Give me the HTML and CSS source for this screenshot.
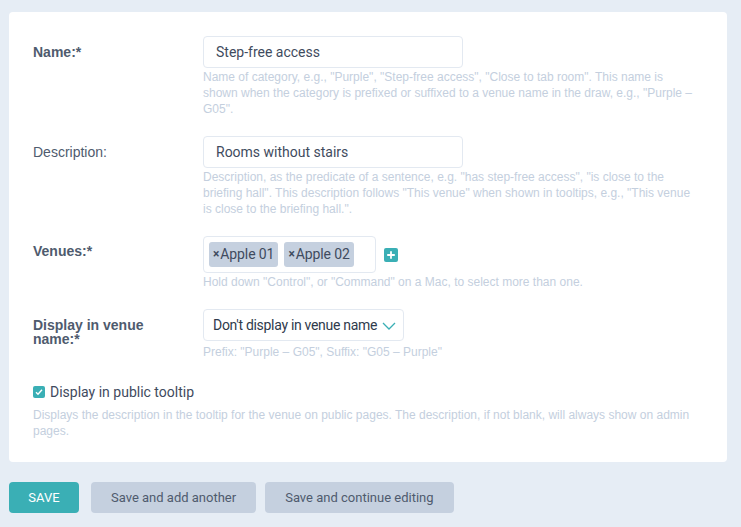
FILE: index.html
```html
<!DOCTYPE html>
<html>
<head>
<meta charset="utf-8">
<link rel="stylesheet" href="styles.css">
</head>
<body>
<div class="card">
  <div class="row">
    <div class="label req">Name:*</div>
    <div class="field">
      <div class="input">Step-free access</div>
      <div class="help">Name of category, e.g., "Purple", "Step-free access", "Close to tab room". This name is shown when the category is prefixed or suffixed to a venue name in the draw, e.g., "Purple – G05".</div>
    </div>
  </div>
  <div class="row">
    <div class="label">Description:</div>
    <div class="field">
      <div class="input">Rooms without stairs</div>
      <div class="help">Description, as the predicate of a sentence, e.g. "has step-free access", "is close to the briefing hall". This description follows "This venue" when shown in tooltips, e.g., "This venue is close to the briefing hall.".</div>
    </div>
  </div>
  <div class="row">
    <div class="label req venues-label">Venues:*</div>
    <div class="field">
      <div class="venues">
        <div class="multi">
          <span class="tag"><span class="x">×</span>Apple 01</span>
          <span class="tag"><span class="x">×</span>Apple 02</span>
        </div>
        <span class="plus"><svg width="14" height="14" viewBox="0 0 14 14"><rect width="14" height="14" rx="2" fill="#3aafb5"/><path d="M7 3.2v7.6M3.2 7h7.6" stroke="#fff" stroke-width="1.8"/></svg></span>
      </div>
      <div class="help">Hold down "Control", or "Command" on a Mac, to select more than one.</div>
    </div>
  </div>
  <div class="row">
    <div class="label req two">Display in venue name:*</div>
    <div class="field">
      <div class="select">Don't display in venue name<svg class="chev" width="14" height="8" viewBox="0 0 14 8"><path d="M1 1l6 6 6-6" fill="none" stroke="#3aafb5" stroke-width="1.3"/></svg></div>
      <div class="help sel-help">Prefix: "Purple – G05", Suffix: "G05 – Purple"</div>
    </div>
  </div>
  <div class="check-row">
    <label class="check"><span class="box"><svg width="12" height="12" viewBox="0 0 12 12"><rect width="12" height="12" rx="2" fill="#3aafb5"/><path d="M3 6.2l2 2 4-4.4" fill="none" stroke="#fff" stroke-width="1.4"/></svg></span>Display in public tooltip</label>
    <div class="help wide">Displays the description in the tooltip for the venue on public pages. The description, if not blank, will always show on admin pages.</div>
  </div>
</div>
<div class="actions">
  <button class="btn primary">SAVE</button>
  <button class="btn">Save and add another</button>
  <button class="btn">Save and continue editing</button>
</div>
</body>
</html>
```
FILE: styles.css
```css
html, body {
  margin: 0;
  padding: 0;
  background: #e6edf5;
}
body {
  padding: 12px 14px 0 9px;
  font-family: "Liberation Sans", Arial, sans-serif;
  color: #4a5568;
}
.card {
  background: #fff;
  border-radius: 4px;
  padding: 24px 24px 0 24px;
  height: 450px;
  box-sizing: border-box;
}
.row {
  display: flex;
  margin-bottom: 19px;
}
.label {
  width: 170px;
  flex: none;
  font-size: 14px;
  line-height: 14px;
  padding-top: 9px;
  color: #4f5b6e;
}
.label.req { font-weight: bold; }
.label.venues-label { padding-top: 8px; }
.label.two { width: 130px; margin-right: 40px; padding-top: 9px; }
.field { flex: 1; }
.input, .select {
  box-sizing: border-box;
  height: 32px;
  width: 260px;
  border: 1px solid #e3e9f1;
  border-radius: 4px;
  padding: 0 12px;
  font-family: Roboto, "Open Sans", sans-serif;
  font-size: 14px;
  line-height: 30px;
  color: #3f4b5e;
}
.select {
  display: inline-flex;
  align-items: center;
  width: auto;
  padding: 0 7px 0 9px;
  color: #2f3a4c;
  letter-spacing: -0.3px;
}
.chev { margin-left: 5px; margin-top: 1px; }
.help {
  font-size: 12px;
  line-height: 16px;
  color: #c4cfde;
  margin-top: 1px;
  max-width: 490px;
}
.help.sel-help { margin-top: 3px; }
.venues {
  display: flex;
  align-items: center;
}
.multi {
  box-sizing: border-box;
  height: 37px;
  border: 1px solid #e3e9f1;
  border-radius: 4px;
  padding: 5px;
  display: flex;
  gap: 6px;
  width: 173px;
}
.tag {
  background: #c5d0df;
  border-radius: 3px;
  height: 25px;
  padding: 0 4px;
  font-family: Roboto, "Open Sans", sans-serif;
  font-size: 14px;
  line-height: 25px;
  color: #3f4b5e;
  display: inline-flex;
  align-items: center;
  letter-spacing: -0.1px;
}
.x { font-weight: bold; font-size: 12px; margin-right: 1px; }
.plus { margin-left: 8px; display: inline-flex; }
.check-row { margin-top: 22px; }
.check {
  display: flex;
  align-items: center;
  height: 20px;
  font-family: Roboto, "Open Sans", sans-serif;
  font-size: 14px;
  color: #3f4b5e;
}
.box { display: inline-flex; margin-right: 5px; }
.help.wide { margin-top: 5px; max-width: none; }
.actions {
  display: flex;
  gap: 9px;
  margin-top: 20px;
}
.btn {
  border: none;
  border-radius: 4px;
  height: 31px;
  padding: 0 20px;
  background: #c5d0df;
  color: #4f5b6e;
  font-family: Roboto, "Open Sans", sans-serif;
  font-size: 13px;
}
.btn.primary {
  background: #3aafb5;
  color: #fff;
  width: 70px;
  padding: 0;
  margin-right: 3px;
}
```
